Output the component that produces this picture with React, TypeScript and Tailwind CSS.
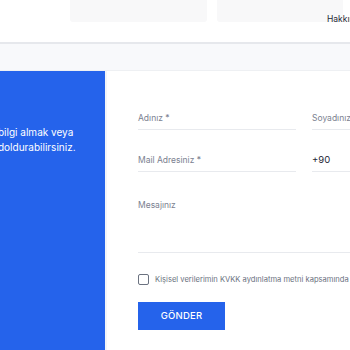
import React from 'react';

const Field: React.FC<{ label: string; value?: string; className?: string }> = ({ label, value, className = '' }) => (
  <div className={`h-[26px] flex items-end pb-[6px] border-b border-[#e8eaee] ${className}`}>
    {value ? (
      <span className="text-[9.5px] leading-[10px] text-[#1f2937]">{value}</span>
    ) : (
      <span className="text-[8.5px] leading-[10px] text-[#7b8190]">{label}</span>
    )}
  </div>
);

const App: React.FC = () => {
  return (
    <div className="w-[350px] h-[350px] overflow-hidden bg-white flex flex-col" style={{ fontFamily: 'Inter, "Noto Sans", sans-serif' }}>
      {/* Header */}
      <div className="relative h-[44px] shrink-0 border-b-2 border-[#e6e8ec] bg-white">
        <div className="flex gap-[10px] pl-[70px]">
          <div className="w-[137px] h-[22px] rounded-b-[3px] bg-[#f8f8f9]" />
          <div className="w-[126px] h-[22px] rounded-b-[3px] bg-[#f8f8f9]" />
        </div>
        <span className="absolute left-[327px] top-[13px] text-[8.5px] text-[#1f2937] whitespace-nowrap">Hakkımızda</span>
      </div>

      {/* Band */}
      <div className="h-[27px] shrink-0 bg-[#f8f9fb] border-b border-[#eef0f3]" />

      {/* Main */}
      <div className="flex flex-1 min-h-0">
        <div className="w-[105px] shrink-0 bg-[#2563eb] overflow-hidden pt-[54px]">
          <p className="-ml-[2px] text-[10px] leading-[15px] text-white whitespace-nowrap">
            bilgi almak veya
            <br />
            doldurabilirsiniz.
          </p>
        </div>
        <div className="w-[2px] shrink-0 bg-[#f3f5f8]" />
        <div className="flex-1 min-w-0 pl-[31px] pt-[33px] flex flex-col">
          <div className="flex gap-[16px]">
            <Field label="Adınız *" className="w-[158px] shrink-0" />
            <Field label="Soyadınız *" className="w-[60px] shrink-0" />
          </div>
          <div className="flex gap-[16px] mt-[16px]">
            <Field label="Mail Adresiniz *" className="w-[158px] shrink-0" />
            <Field label="" value="+90" className="w-[60px] shrink-0" />
          </div>
          <div className="mt-[18px] h-[63px] border-b border-[#e8eaee] w-[260px]">
            <span className="text-[8.5px] leading-[10px] text-[#7b8190]">Mesajınız</span>
          </div>
          <div className="mt-[21px] flex items-center gap-[6px] whitespace-nowrap">
            <div className="w-[11px] h-[11px] rounded-[2px] border-[1.5px] border-[#6b7280] shrink-0" />
            <span className="text-[7.6px] text-[#6b7280]">Kişisel verilerimin KVKK aydınlatma metni kapsamında işlenmesini kabul ediyorum.</span>
          </div>
          <button className="mt-[17px] w-[87px] h-[28px] bg-[#2563eb] text-white text-[9.5px] font-medium tracking-[0.2px]">
            GÖNDER
          </button>
        </div>
      </div>
    </div>
  );
};

export default App;
